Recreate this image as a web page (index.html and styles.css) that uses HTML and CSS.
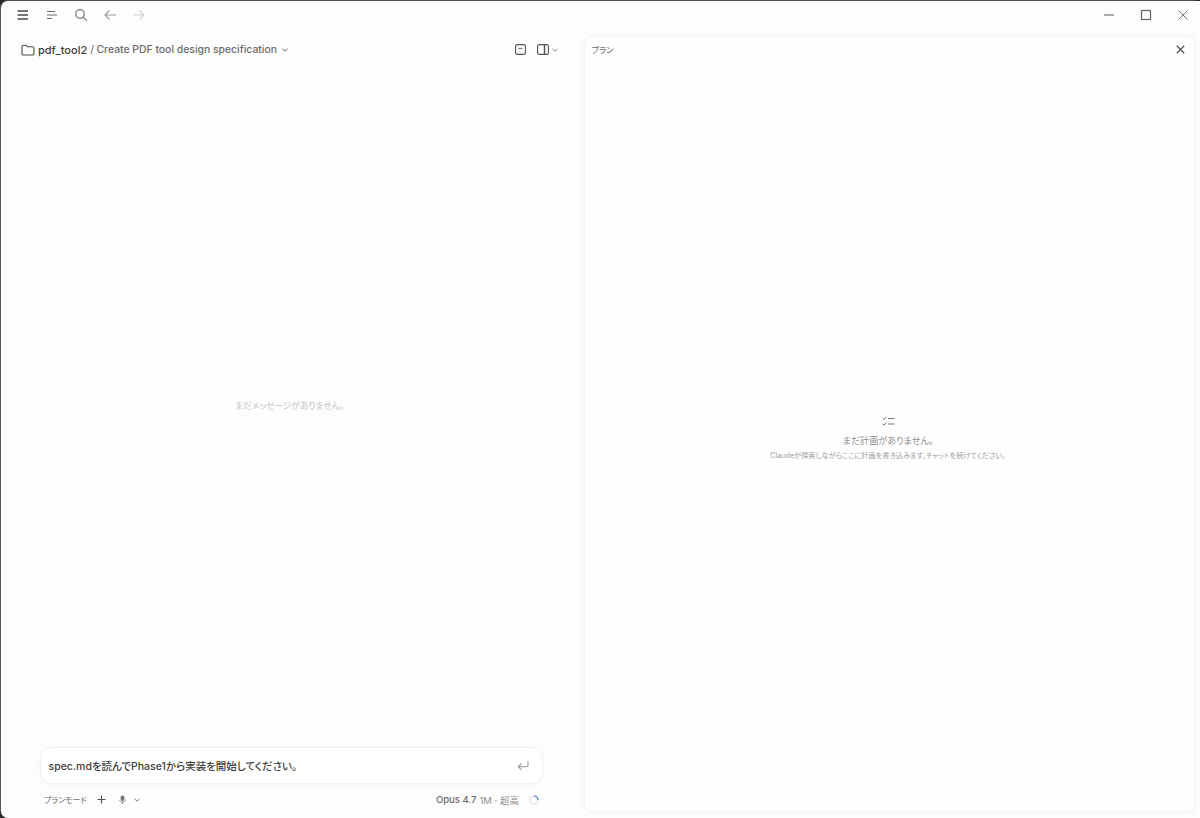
FILE: index.html
```html
<!DOCTYPE html>
<html lang="ja">
<head>
    <meta charset="UTF-8">
    <title>pdf_tool2</title>
    <link rel="stylesheet" href="styles.css">
</head>
<body>

<div class="window">
    <div class="titlebar">
        <div class="nav-icons">
            <svg class="icon menu" width="14" height="14" viewBox="0 0 14 14"><path d="M1.500 3h10.500M1.500 7h10.500M1.500 11h10.500" stroke="#4a4a4a" stroke-width="1.400" fill="none"/></svg>
            <svg class="icon sidebar" width="14" height="14" viewBox="0 0 14 14"><path d="M2 3.500h8M2 7h10M2 10.500h5" stroke="#666" stroke-width="1.200" fill="none"/></svg>
            <svg class="icon search" width="14" height="14" viewBox="0 0 14 14"><circle cx="6" cy="6" r="4.300" stroke="#777" stroke-width="1.200" fill="none"/><path d="M9.200 9.200l3.600 3.600" stroke="#777" stroke-width="1.200"/></svg>
            <svg class="icon back" width="14" height="14" viewBox="0 0 14 14"><path d="M13 7H2M6.500 2.500L2 7l4.500 4.500" stroke="#999" stroke-width="1.100" fill="none"/></svg>
            <svg class="icon forward" width="14" height="14" viewBox="0 0 14 14"><path d="M1 7h11M7.500 2.500L12 7l-4.500 4.500" stroke="#d2d2d2" stroke-width="1.100" fill="none"/></svg>
        </div>
        <div class="window-controls">
            <svg width="12" height="12" viewBox="0 0 12 12"><path d="M1 6h10" stroke="#777" stroke-width="1.200"/></svg>
            <svg width="12" height="12" viewBox="0 0 12 12"><rect x="1.500" y="1.500" width="9" height="9" fill="none" stroke="#666" stroke-width="1.200"/></svg>
            <svg width="12" height="12" viewBox="0 0 12 12"><path d="M1.500 1.500l9 9M10.500 1.500l-9 9" stroke="#777" stroke-width="1"/></svg>
        </div>
    </div>

    <div class="main">
        <div class="chat">
            <div class="chat-header">
                <div class="breadcrumb">
                    <svg class="folder" width="14" height="12" viewBox="0 0 14 12"><path d="M1 2.500c0-.8.500-1.300 1.300-1.300h2.900l1.300 1.500h5.100c.8 0 1.300.5 1.300 1.300v5.700c0 .8-.5 1.300-1.300 1.300H2.300c-.8 0-1.300-.5-1.300-1.300z" stroke="#4a4a4a" stroke-width="1.100" fill="none"/></svg>
                    <span class="project">pdf_tool2</span>
                    <span class="slash">/</span>
                    <span class="session">Create PDF tool design specification</span>
                    <svg class="caret" width="6" height="4" viewBox="0 0 6 4"><path d="M.5 .8L3 3.200 5.500 .8" stroke="#666" stroke-width="1" fill="none"/></svg>
                </div>
                <div class="header-tools">
                    <svg width="11" height="11" viewBox="0 0 11 11"><rect x=".6" y=".6" width="9.800" height="9.800" rx="1.500" fill="none" stroke="#555" stroke-width="1.100"/><path d="M3.500 4.500h4" stroke="#777" stroke-width="1.200"/></svg>
                    <svg class="panel" width="12" height="11" viewBox="0 0 12 11"><rect x=".6" y=".6" width="10.800" height="9.800" rx="1.500" fill="none" stroke="#555" stroke-width="1.100"/><path d="M7.500 1v9" stroke="#555" stroke-width="1.500"/></svg>
                    <svg class="caret" width="6" height="4" viewBox="0 0 6 4"><path d="M.5 .8L3 3.200 5.500 .8" stroke="#888" stroke-width="1" fill="none"/></svg>
                </div>
            </div>

            <div class="chat-empty">まだメッセージがありません。</div>

            <div class="composer">
                <span class="composer-text">spec.mdを読んでPhase1から実装を開始してください。</span>
                <svg width="12" height="11" viewBox="0 0 12 11"><path d="M11 1v4.500c0 .8-.5 1.200-1.200 1.200H1.500M4.500 3.500L1.300 6.700l3.200 3.200" stroke="#999" stroke-width="1.100" fill="none"/></svg>
            </div>
            <div class="composer-bar">
                <div class="bar-left">
                    <span class="mode">プランモード</span>
                    <svg class="plus" width="9" height="9" viewBox="0 0 9 9"><path d="M4.500 .5v8M.5 4.500h8" stroke="#555" stroke-width="1.100"/></svg>
                    <svg class="mic" width="7" height="9" viewBox="0 0 7 9"><rect x="1.600" y=".5" width="3.800" height="5.500" rx="1.900" fill="#777"/><path d="M.6 4.800c0 3 5.800 3 5.800 0M3.500 7v2" stroke="#777" stroke-width=".8" fill="none"/></svg>
                    <svg class="caret" width="6" height="4" viewBox="0 0 6 4"><path d="M.5 .8L3 3.200 5.500 .8" stroke="#777" stroke-width="1" fill="none"/></svg>
                </div>
                <div class="bar-right">
                    <span class="model">Opus 4.7</span>
                    <span class="model-info">1M · 超高</span>
                    <svg class="spinner" width="10" height="10" viewBox="0 0 10 10"><circle cx="5" cy="5" r="4" stroke="#d9dde2" stroke-width="1.200" fill="none"/><path d="M5 1a4 4 0 0 1 4 4" stroke="#4a6fc0" stroke-width="1.200" fill="none"/></svg>
                </div>
            </div>
        </div>

        <div class="plan">
            <div class="plan-header">
                <span class="plan-title">プラン</span>
                <svg width="9" height="9" viewBox="0 0 9 9"><path d="M.8 .8l7.400 7.400M8.200 .8L.8 8.200" stroke="#555" stroke-width="1.300"/></svg>
            </div>
            <div class="plan-empty">
                <svg class="plan-icon" width="13" height="11" viewBox="0 0 13 11"><path d="M.8 2.500l1.200 1.200L4.200 1M.8 8l1.200 1.200L4.200 6.500" stroke="#777" stroke-width="1" fill="none"/><path d="M6 2.500h6.500M6 8h6.500" stroke="#777" stroke-width="1.100"/></svg>
                <p class="plan-empty-title">まだ計画がありません。</p>
                <p class="plan-empty-sub">Claudeが探索しながらここに計画を書き込みます。チャットを続けてください。</p>
            </div>
        </div>
    </div>
</div>

</body>
</html>
```

FILE: styles.css
```css
:root {
    --page-bg: #fdfdfd;
    --panel-bg: #fefefe;
    --text-dark: #3d3d3d;
    --text-mid: #6b6b6b;
    --text-soft: #8e8e8e;
}

* {
    box-sizing: border-box;
}

html, body {
    margin: 0;
    height: 100%;
    background-color: #2a2a2a;
}

body {
    font-family: Inter, "Noto Sans CJK JP", sans-serif;
    font-feature-settings: "palt";
    color: var(--text-dark);
}

svg {
    display: block;
    flex: none;
}

p {
    margin: 0;
}

.window {
    height: 818px;
    display: flex;
    flex-direction: column;
    padding: 1px 0 0 1px;
    background-color: #555;
    border-radius: 8px;
}

.titlebar {
    height: 28px;
    display: flex;
    align-items: center;
    justify-content: space-between;
    background-color: var(--page-bg);
    border-radius: 7px 0 0 0;
    padding: 0 11.500px 0 15px;
}

.nav-icons {
    display: flex;
    align-items: center;
    gap: 15px;
}

.window-controls {
    display: flex;
    align-items: center;
    gap: 25px;
}

.main {
    flex: 1;
    display: flex;
    min-height: 0;
    background-color: var(--page-bg);
    padding: 7px 5px 6px 0;
    border-radius: 0 0 0 7px;
}

.chat {
    width: 583px;
    display: flex;
    flex-direction: column;
    padding: 0 26px 0 20px;
}

.chat-header {
    height: 25px;
    padding-top: 2px;
    display: flex;
    align-items: center;
    justify-content: space-between;
}

.breadcrumb {
    display: flex;
    align-items: center;
    font-size: 11px;
    font-weight: 500;
    white-space: nowrap;
}

.folder {
    margin-right: 3px;
}

.project {
    color: var(--text-dark);
}

.slash {
    margin: 0 2.500px 0 3px;
    color: var(--text-mid);
    font-weight: 400;
    font-size: 10.500px;
}

.session {
    font-size: 10.400px;
    color: var(--text-mid);
}

.breadcrumb .caret {
    margin-left: 5px;
}

.header-tools {
    display: flex;
    align-items: center;
}

.panel {
    margin-left: 11px;
    margin-right: 3px;
}

.chat-empty {
    flex: 1;
    display: flex;
    align-items: center;
    justify-content: center;
    padding: 2px 0 0 0;
    font-size: 8.700px;
    color: #c4c4c4;
}

.composer {
    height: 37px;
    margin: 0 15px 0 19px;
    padding: 0 13px 0 7.500px;
    display: flex;
    align-items: center;
    justify-content: space-between;
    background-color: #fff;
    border: 1px solid #f1f1f1;
    border-radius: 11px;
    box-shadow: 0 1px 4px rgba(0, 0, 0, 0.03);
}

.composer-text {
    font-size: 10.500px;
    font-weight: 500;
    color: var(--text-dark);
}

.composer-bar {
    height: 28px;
    padding-top: 3px;
    margin: 0 15px 0 23px;
    display: flex;
    align-items: center;
    justify-content: space-between;
    font-size: 9.500px;
}

.bar-left,
.bar-right {
    display: flex;
    align-items: center;
}

.mode {
    font-size: 7.900px;
    color: var(--text-mid);
    margin-right: 10.500px;
}

.mic {
    margin-left: 13px;
    margin-right: 7.500px;
}

.model {
    color: var(--text-mid);
    font-weight: 500;
}

.model-info {
    margin-left: 3px;
    color: var(--text-soft);
}

.spinner {
    margin-left: 10px;
    margin-right: 4px;
}

.plan {
    flex: 1;
    display: flex;
    flex-direction: column;
    background-color: var(--panel-bg);
    border-radius: 8px;
    border: 1px solid #f4f4f4;
    box-shadow: 0 0 6px rgba(0, 0, 0, 0.04);
}

.plan-header {
    height: 24px;
    display: flex;
    align-items: center;
    justify-content: space-between;
    padding: 0 9px 0 6.500px;
}

.plan-title {
    font-size: 8.200px;
    color: var(--text-mid);
}

.plan-empty {
    flex: 1;
    display: flex;
    flex-direction: column;
    align-items: center;
    justify-content: center;
    padding: 7px 3px 0 0;
}

.plan-icon {
    margin-bottom: 6px;
}

.plan-empty-title {
    font-size: 9.100px;
    line-height: 15px;
    color: var(--text-soft);
}

.plan-empty-sub {
    font-size: 7.200px;
    line-height: 15px;
    color: #a0a0a0;
}
```
